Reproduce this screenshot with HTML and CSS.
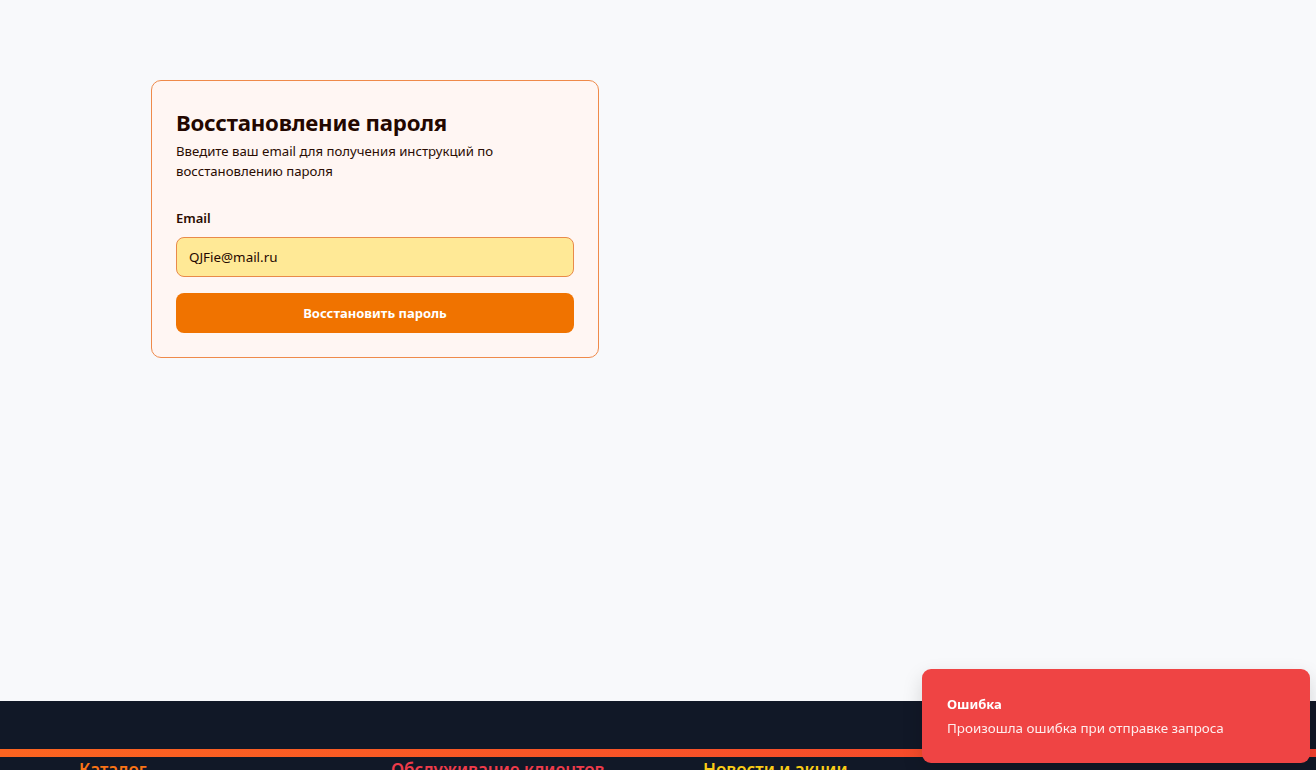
FILE: index.html
```html
<!DOCTYPE html>
<html lang="ru">
<head>
<meta charset="utf-8">
<title>Восстановление пароля</title>
<link rel="stylesheet" href="styles.css">
</head>
<body>
<main class="main">
  <section class="card">
    <h1 class="card-title">Восстановление пароля</h1>
    <p class="card-sub">Введите ваш email для получения инструкций по восстановлению пароля</p>
    <form class="form">
      <label class="label" for="email">Email</label>
      <input class="input" id="email" type="email" value="QJFie@mail.ru">
      <button class="btn" type="button">Восстановить пароль</button>
    </form>
  </section>
</main>
<footer class="footer">
  <div class="footer-bar"></div>
  <div class="footer-grid">
    <h3 class="fh fh-orange">Каталог</h3>
    <h3 class="fh fh-red">Обслуживание клиентов</h3>
    <h3 class="fh fh-yellow">Новости и акции</h3>
    <div></div>
  </div>
</footer>
<div class="toast">
  <div class="toast-title">Ошибка</div>
  <div class="toast-msg">Произошла ошибка при отправке запроса</div>
</div>
</body>
</html>
```
FILE: styles.css
```css
* { box-sizing: border-box; }
html, body { margin: 0; padding: 0; }
body {
  font-family: "Noto Sans", "Open Sans", sans-serif;
  background: #f8f9fb;
  color: #2a0c02;
  height: 770px;
  overflow: hidden;
}
.main {
  height: 701px;
  padding: 80px 0 0 151px;
}
.card {
  width: 448px;
  background: #fff6f3;
  border: 1px solid #ef8a4a;
  border-radius: 10px;
  padding: 26px 24px 24px 24px;
}
.card-title {
  margin: 0;
  font-size: 22.2px;
  line-height: 32px;
  font-weight: 700;
  color: #230700;
  letter-spacing: -0.2px;
}
.card-sub {
  margin: 2px 0 0;
  font-size: 13.2px;
  line-height: 20px;
  color: #2a0c02;
}
.form {
  margin-top: 27px;
  display: flex;
  flex-direction: column;
}
.label {
  font-size: 13px;
  font-weight: 600;
  line-height: 20px;
  color: #2a0c02;
}
.input {
  margin-top: 9px;
  height: 40px;
  border: 1px solid #e98a4a;
  border-radius: 8px;
  background: #ffe996;
  padding: 0 12px;
  font-family: inherit;
  font-size: 13.4px;
  color: #1f0800;
  outline: none;
}
.btn {
  margin-top: 16px;
  height: 40px;
  border: none;
  border-radius: 8px;
  background: #f07300;
  color: #fff;
  font-family: inherit;
  font-size: 13px;
  font-weight: 700;
}
.footer {
  background: #111827;
  padding-top: 48px;
  height: 69px;
}
.footer-bar {
  height: 8px;
  background: linear-gradient(to right, #fb6420, #f4412f);
}
.footer-grid {
  display: grid;
  grid-template-columns: repeat(4, 280px);
  column-gap: 32px;
  padding: 2px 0 0 79px;
}
.fh {
  margin: 0;
  font-size: 17px;
  font-weight: 600;
  line-height: 22px;
}
.fh-orange { color: #f97316; }
.fh-red { color: #ef3b4a; }
.fh-yellow { color: #facc15; }
.toast {
  position: fixed;
  right: 6px;
  bottom: 7px;
  width: 388px;
  background: #ef4444;
  border-radius: 9px;
  padding: 25px 25px 25px 25px;
  box-shadow: 0 8px 20px rgba(0,0,0,0.15);
  color: #fff;
}
.toast-title {
  font-size: 13px;
  font-weight: 700;
  line-height: 20px;
}
.toast-msg {
  margin-top: 4px;
  font-size: 13.4px;
  line-height: 20px;
  color: rgba(255,255,255,0.9);
}
```
